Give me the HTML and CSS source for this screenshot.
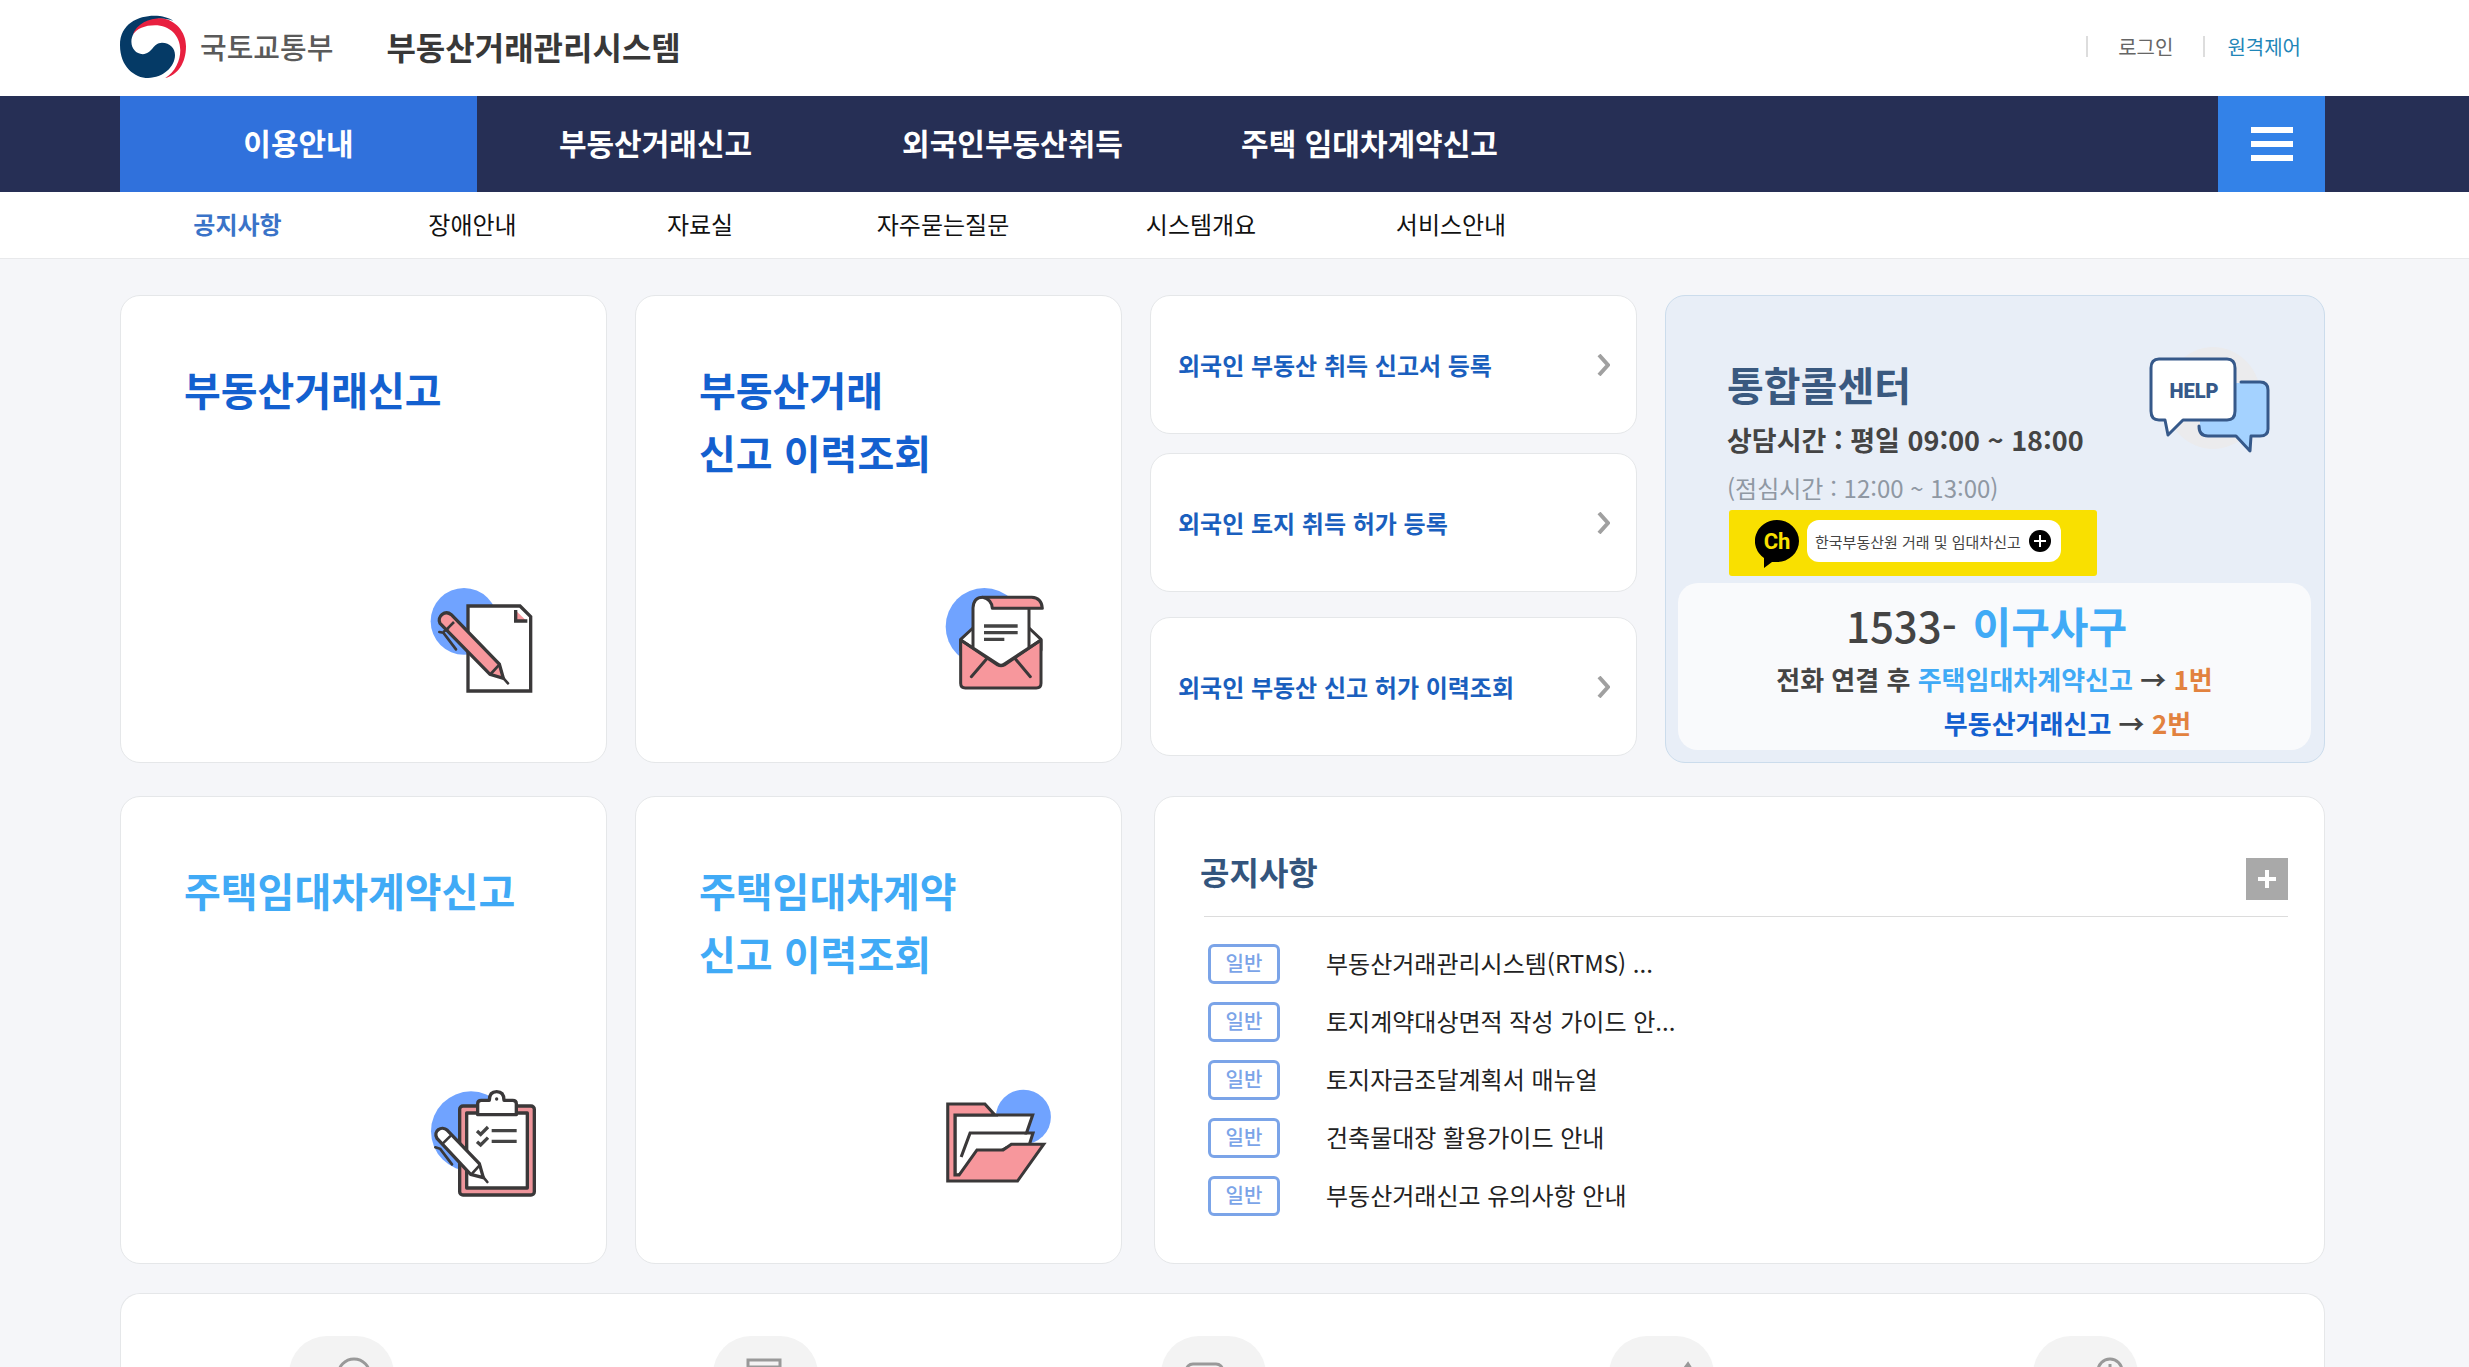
FILE: index.html
```html
<!DOCTYPE html>
<html lang="ko">
<head>
  <meta charset="UTF-8">
  <meta name="viewport" content="width=device-width, initial-scale=1.0">
  <title>부동산거래관리시스템</title>
  <link rel="stylesheet" href="styles.css">
</head>
<body>

  <header class="header inner">
    <a href="#" class="logo">
      <svg class="emblem" viewBox="49 44 162 190" preserveAspectRatio="none" aria-hidden="true">
        <path fill="#053a66" d="M180 62C150 32 49 38 49 135C49 200 85 234 118 234C155 234 184 200 184 165C184 145 172 128 152 128C130 128 128 162 105 162C88 162 77 145 77 125C77 85 115 55 150 55C160 55 170 56 180 62Z"/>
        <path fill="#e8203f" d="M80 104C90 70 120 54 150 54C185 58 211 95 211 138C211 190 190 225 160 234C185 215 197 180 197 150C197 105 170 75 135 75C110 75 90 85 80 104Z"/>
      </svg>
      <span class="ministry">국토교통부</span>
    </a>
    <h1 class="site-title">부동산거래관리시스템</h1>
    <div class="util">
      <a href="#">로그인</a>
      <a href="#" class="remote">원격제어</a>
    </div>
  </header>

  <nav class="gnb">
    <div class="inner gnb-inner">
      <a href="#" class="on">이용안내</a>
      <a href="#">부동산거래신고</a>
      <a href="#">외국인부동산취득</a>
      <a href="#">주택 임대차계약신고</a>
      <button type="button" class="menu-btn" aria-label="전체메뉴"><span></span><span></span><span></span></button>
    </div>
  </nav>

  <nav class="lnb inner">
    <a href="#" class="on">공지사항</a>
    <a href="#">장애안내</a>
    <a href="#">자료실</a>
    <a href="#">자주묻는질문</a>
    <a href="#">시스템개요</a>
    <a href="#">서비스안내</a>
  </nav>

  <main class="main inner">
    <div class="grid">
      <a href="#" class="card menu-card">
        <strong>부동산거래신고</strong>
        <svg viewBox="960 921 327 327" aria-hidden="true">
          <circle cx="1062" cy="1024" r="100" fill="#70a3ff"/>
          <g stroke="#3a3839" stroke-width="10">
            <path fill="#fff" d="M1074 978H1230L1262 1010V1233H1074Z"/>
            <path fill="#f7979c" stroke="none" d="M1218 992L1250 1023H1218Z"/>
            <path fill="none" d="M1217 990V1023H1252"/>
            <path fill="#f7979c" d="M990 1030C980 1010 1005 988 1024 1004L1168 1152L1180 1195L1140 1183Z"/>
            <path fill="none" stroke-width="8" d="M1010 1048L1032 1026M1142 1182L1168 1154M1016 1044L1000 1056"/>
            <path fill="none" stroke-width="8" stroke-linecap="round" d="M988 1056L1000 1058L1038 1108M1176 1190L1194 1210"/>
          </g>
        </svg>
      </a>
      <a href="#" class="card menu-card">
        <strong>부동산거래<br>신고 이력조회</strong>
        <svg viewBox="972 921 327 327" aria-hidden="true">
          <circle cx="1090" cy="1040" r="116" fill="#70a3ff"/>
          <g stroke="#3a3839" stroke-width="9" stroke-linejoin="round">
            <path fill="#fff" d="M1019 1078L1056 1044H1224L1260 1078V1110H1019Z"/>
            <path fill="#f7979c" d="M1019 1080V1210Q1019 1224 1033 1224H1246Q1260 1224 1260 1210V1080L1150 1155Q1140 1160 1130 1155Z"/>
            <path fill="none" d="M1096 1138L1051 1190M1184 1138L1228 1190" stroke-linecap="round"/>
            <path fill="#fff" stroke="none" d="M1056 1102V978Q1060 952 1085 952H1224V1102L1150 1152Q1140 1160 1130 1152Z"/>
            <path fill="none" d="M1056 1102V984Q1058 952 1085 952M1224 986V1102"/>
            <path fill="none" d="M1019 1080L1130 1152Q1140 1160 1150 1152L1260 1080"/>
            <path fill="#f7979c" d="M1085 952H1232Q1262 954 1264 985H1114Q1112 958 1085 952Z"/>
            <path fill="none" stroke="#444" stroke-width="10" d="M1089 1038H1190M1089 1058H1190M1089 1078H1150"/>
          </g>
        </svg>
      </a>

      <div class="foreigner">
        <a href="#" class="card">외국인 부동산 취득 신고서 등록
          <svg viewBox="0 0 13 22" aria-hidden="true"><path d="M2 1L11 11L2 21"/></svg></a>
        <a href="#" class="card">외국인 토지 취득 허가 등록
          <svg viewBox="0 0 13 22" aria-hidden="true"><path d="M2 1L11 11L2 21"/></svg></a>
        <a href="#" class="card">외국인 부동산 신고 허가 이력조회
          <svg viewBox="0 0 13 22" aria-hidden="true"><path d="M2 1L11 11L2 21"/></svg></a>
      </div>

      <section class="card call">
        <div class="call-head">
          <div>
            <h2>통합콜센터</h2>
            <p class="hours">상담시간 : 평일 09:00 ~ 18:00</p>
            <p class="lunch">(점심시간 : 12:00 ~ 13:00)</p>
          </div>
          <svg class="help" viewBox="0 0 125 110" aria-hidden="true">
            <ellipse cx="66" cy="53" rx="48" ry="51" fill="#ebebed"/>
            <path fill="#a4d2ff" d="M88 38H113Q120 38 120 45V84Q120 91 113 91H104L103 106L89 91H60Q53 91 53 84V74H80Q88 74 88 66Z"/>
            <path fill="none" stroke="#36598a" stroke-width="3" stroke-linecap="round" stroke-linejoin="round" d="M94 37H113Q121 37 121 45V84Q121 91 113 91H104L103 106L89 91H61Q52 91 52 81"/>
            <path fill="#fff" stroke="#36598a" stroke-width="3" stroke-linejoin="round" d="M12 14H80Q88 14 88 23V66Q88 75 80 75H36L21 90L18 75H12Q4 75 4 66V23Q4 14 12 14Z"/>
            <text x="47" y="53" text-anchor="middle">HELP</text>
          </svg>
        </div>
        <a href="#" class="kakao">
          <svg class="ch" viewBox="0 0 44 48" aria-hidden="true">
            <path d="M22 0A22 21 0 0 1 22 42Q19 42 17 42L9 48V38A22 21 0 0 1 22 0Z"/>
            <text x="22" y="29" text-anchor="middle">Ch</text>
          </svg>
          <span class="kakao-name">한국부동산원 거래 및 임대차신고
            <svg viewBox="0 0 22 22" aria-hidden="true"><circle cx="11" cy="11" r="11"/><path stroke="#fff" stroke-width="2" d="M5 11H17M11 5V17"/></svg>
          </span>
        </a>
        <div class="tel">
          <p class="tel-num">1533- <em>이구사구</em></p>
          <p>전화 연결 후 <span class="sky">주택임대차계약신고</span> → <span class="orange">1번</span></p>
          <p class="tel-second"><span class="blue">부동산거래신고</span> → <span class="orange">2번</span></p>
        </div>
      </section>
    </div>

    <div class="grid">
      <a href="#" class="card menu-card sky">
        <strong>주택임대차계약신고</strong>
        <svg viewBox="960 921 327 327" aria-hidden="true">
          <circle cx="1083" cy="1051" r="120" fill="#70a3ff"/>
          <g stroke="#3a3839" stroke-width="10" stroke-linejoin="round">
            <rect x="1049" y="975" width="224" height="267" rx="10" fill="#ee959b"/>
            <rect x="1070" y="996" width="182" height="225" fill="#fff"/>
            <path fill="#fff" d="M1103 1001V968Q1103 958 1114 958H1138Q1138 932 1160 932Q1182 932 1182 958H1208Q1219 958 1219 968V1001Z"/>
            <circle cx="1160" cy="954" r="3" fill="#3a3839" stroke-width="4"/>
            <path fill="none" stroke="#444" d="M1145 1049H1220M1145 1081H1220M1101 1050L1112 1060L1134 1038M1101 1082L1112 1092L1134 1070" stroke-linejoin="miter"/>
            <path fill="#fff" d="M981 1072C968 1050 995 1032 1012 1048L1108 1148L1120 1190L1082 1180Z"/>
            <path fill="none" stroke-width="8" stroke-linecap="round" d="M998 1088L1020 1066M1086 1178L1108 1154M1118 1186L1132 1203M976 1099L990 1103L1026 1150"/>
          </g>
        </svg>
      </a>
      <a href="#" class="card menu-card sky">
        <strong>주택임대차계약<br>신고 이력조회</strong>
        <svg viewBox="941 921 317 327" preserveAspectRatio="none" aria-hidden="true">
          <ellipse cx="1169" cy="1008" rx="80" ry="82" fill="#70a3ff"/>
          <g stroke="#3a3839" stroke-width="9">
            <path fill="#f7979c" d="M949 969H1057L1086 1002H1195L1100 1200H949Z" stroke="none"/>
            <path fill="#fff" d="M970 1002H1196L1178 1056H1197L1186 1092L1120 1100L980 1182H970Z"/>
            <path fill="none" d="M988 1128L1014 1056H1180"/>
            <path fill="#f7979c" d="M1152 1200L1228 1090H1134L1110 1107H1034L982 1182H970V1002H1086L1057 969H949V1200Z"/>
          </g>
        </svg>
      </a>

      <section class="card notice">
        <div class="notice-head">
          <h2>공지사항</h2>
          <button type="button" class="more" aria-label="공지사항 더보기"></button>
        </div>
        <ul>
          <li><span class="badge">일반</span><a href="#">부동산거래관리시스템(RTMS) ...</a></li>
          <li><span class="badge">일반</span><a href="#">토지계약대상면적 작성 가이드 안...</a></li>
          <li><span class="badge">일반</span><a href="#">토지자금조달계획서 매뉴얼</a></li>
          <li><span class="badge">일반</span><a href="#">건축물대장 활용가이드 안내</a></li>
          <li><span class="badge">일반</span><a href="#">부동산거래신고 유의사항 안내</a></li>
        </ul>
      </section>
    </div>

    <div class="card quick">
      <a href="#" aria-label="조회"><svg viewBox="0 0 105 105"><circle cx="65" cy="39" r="16"/><path d="M53 51L36 70"/></svg></a>
      <a href="#" aria-label="서식"><svg viewBox="0 0 105 105"><path d="M35 24H67V78H35ZM35 31H67"/></svg></a>
      <a href="#" aria-label="문의"><svg viewBox="0 0 105 105"><rect x="25" y="28" width="37" height="30" rx="7"/></svg></a>
      <a href="#" aria-label="통계"><svg viewBox="0 0 105 105"><path d="M73 36L79 28L84 36M79 30V70"/></svg></a>
      <a href="#" aria-label="시간안내"><svg viewBox="0 0 105 105"><circle cx="77" cy="35" r="12"/><path d="M77 28V36"/></svg></a>
    </div>
  </main>

</body>
</html>
```
FILE: styles.css
```css
* {
  box-sizing: border-box;
}

body {
  margin: 0;
  font-family: "Noto Sans CJK KR", "Noto Sans", sans-serif;
  background-color: #f5f6f9;
  color: #222;
  overflow-x: hidden;
}

a {
  color: inherit;
  text-decoration: none;
}

h1, h2, p, ul {
  margin: 0;
  padding: 0;
}

ul {
  list-style: none;
}

.inner {
  padding: 0 144px 0 120px;
}

/* header */
.header {
  display: flex;
  align-items: center;
  height: 96px;
  padding-bottom: 4px;
  background-color: #fff;
}

.logo {
  display: flex;
  align-items: center;
  gap: 14px;
}

.emblem {
  width: 66px;
  height: 63px;
}

.ministry {
  font-size: 29px;
  font-weight: 500;
  color: #5a5a5a;
}

.site-title {
  margin-left: 53px;
  font-size: 32px;
  color: #383838;
}

.util {
  display: flex;
  margin-left: auto;
  padding-right: 24px;
  font-size: 20px;
  line-height: 21px;
  color: #666;
}

.util a {
  padding: 0 30px;
  border-left: 2px solid #ddd;
}

.util .remote {
  padding: 0 0 0 22px;
  color: #1f86b8;
}

/* navigation */
.gnb {
  background-color: #262f55;
}

.gnb-inner {
  display: flex;
  height: 96px;
}

.gnb a {
  width: 357px;
  font-size: 30px;
  font-weight: 700;
  line-height: 92px;
  text-align: center;
  color: #fff;
}

.gnb .on {
  background-color: #3071dc;
}

.menu-btn {
  display: flex;
  flex-direction: column;
  align-items: center;
  justify-content: center;
  gap: 8px;
  width: 107px;
  margin-left: auto;
  padding: 0;
  border: none;
  background-color: #3382e8;
  cursor: pointer;
}

.menu-btn span {
  width: 42px;
  height: 6px;
  background-color: #fff;
}

.lnb {
  display: grid;
  grid-template-columns: 235px 235px 220px 266px 250px 250px;
  padding-bottom: 2px;
  border-bottom: 1px solid #e8e9eb;
  background-color: #fff;
  font-size: 24px;
  line-height: 64px;
  text-align: center;
  color: #111;
}

.lnb .on {
  font-weight: 700;
  color: #3a73c8;
}

/* cards */
.main {
  padding-top: 36px;
}

.grid {
  display: grid;
  grid-template-columns: 1fr 1fr 1fr 660px;
  gap: 28px;
  margin-bottom: 33px;
}

.grid + .grid {
  margin-bottom: 29px;
}

.card {
  border: 1px solid #e5e7e9;
  border-radius: 20px;
  background-color: #fff;
}

.menu-card {
  display: flex;
  flex-direction: column;
  justify-content: space-between;
  min-height: 468px;
  padding: 62px 67px 66px 63px;
  font-size: 40px;
  line-height: 63px;
  color: #1360cf;
}

.menu-card svg {
  align-self: flex-end;
  width: 109px;
  height: 109px;
}

.sky,
.menu-card.sky {
  color: #40aaf6;
}

.blue {
  color: #1360cf;
}

.orange {
  color: #e2823f;
}

.foreigner {
  display: flex;
  flex-direction: column;
  gap: 19px;
}

.foreigner .card {
  display: flex;
  align-items: center;
  justify-content: space-between;
  height: 139px;
  padding: 0 26px 0 27px;
  font-size: 24px;
  font-weight: 700;
  color: #1a5fbe;
}

.foreigner .card:last-child {
  margin-top: 6px;
}

.foreigner svg {
  width: 13px;
  height: 22px;
  fill: none;
  stroke: #a0a0a0;
  stroke-width: 4;
}

/* call center */
.call {
  padding: 58px 13px 12px 12px;
  border-color: #cbdcec;
  background-color: #e8eef7;
  color: #444;
}

.call-head {
  display: flex;
  justify-content: space-between;
  padding: 0 39px 0 49px;
}

.call h2 {
  font-size: 40px;
  line-height: 60px;
  color: #3a597f;
}

.hours {
  font-size: 27px;
  font-weight: 700;
  line-height: 52px;
}

.lunch {
  font-size: 24px;
  line-height: 44px;
  color: #8f98a3;
}

.help {
  width: 125px;
  height: 110px;
  margin-top: -9px;
}

.help text {
  font: 900 20px Roboto, sans-serif;
  fill: #36598a;
}

.kakao {
  display: flex;
  gap: 8px;
  width: 368px;
  height: 66px;
  margin-left: 51px;
  padding: 10px 26px;
  border-radius: 3px;
  background-color: #f9e000;
}

.ch {
  width: 44px;
  height: 48px;
}

.ch text {
  font: bold 22px Roboto, sans-serif;
  fill: #f9e000;
}

.kakao-name {
  display: flex;
  align-items: center;
  gap: 8px;
  height: 42px;
  padding: 0 10px 0 8px;
  border-radius: 12px;
  background-color: #fff;
  font-size: 15px;
  white-space: nowrap;
}

.kakao-name svg {
  width: 22px;
  height: 22px;
}

.tel {
  margin-top: 7px;
  padding: 9px 0 5px;
  border-radius: 20px;
  background-color: #f9fafc;
  font-size: 26px;
  font-weight: 700;
  line-height: 44px;
  text-align: center;
}

.tel-num {
  padding-right: 16px;
  font-size: 42px;
  font-weight: 500;
  line-height: 65px;
}

.tel-num em {
  margin-left: 4px;
  font-style: normal;
  font-weight: 700;
  color: #40aaf6;
}

.tel-second {
  padding-left: 146px;
}

/* notice */
.notice {
  grid-column: 3 / 5;
  margin-left: 4px;
  padding: 61px 36px 0 45px;
}

.notice-head {
  display: flex;
  justify-content: space-between;
  padding-bottom: 16px;
}

.notice h2 {
  font-size: 32px;
  line-height: 26px;
  color: #34557d;
}

.more {
  width: 42px;
  height: 42px;
  padding: 0;
  border: none;
  background: linear-gradient(#fff, #fff) center / 18px 4px no-repeat,
    linear-gradient(#fff, #fff) center / 4px 18px no-repeat,
    #a9a9a9;
  cursor: pointer;
}

.notice ul {
  margin-left: 4px;
  padding-top: 18px;
  border-top: 1px solid #dcdcdc;
}

.notice li {
  display: flex;
  align-items: center;
  gap: 46px;
  height: 58px;
  padding-left: 4px;
  font-size: 24px;
}

.notice li a {
  padding-bottom: 4px;
}

.badge {
  width: 72px;
  height: 40px;
  border: 3px solid #7ba4e8;
  border-radius: 6px;
  font-size: 20px;
  font-weight: 500;
  line-height: 32px;
  text-align: center;
  color: #7ba4e8;
}

/* quick links */
.quick {
  display: grid;
  grid-template-columns: 424fr 424fr 472fr 424fr 424fr;
  justify-items: center;
  padding: 42px 27px 0 9px;
  border-bottom: none;
  border-radius: 20px 20px 0 0;
}

.quick svg {
  display: block;
  width: 105px;
  height: 105px;
  border-radius: 38px;
  background-color: #f3f3f3;
  fill: none;
  stroke: #999;
  stroke-width: 3;
}
```
